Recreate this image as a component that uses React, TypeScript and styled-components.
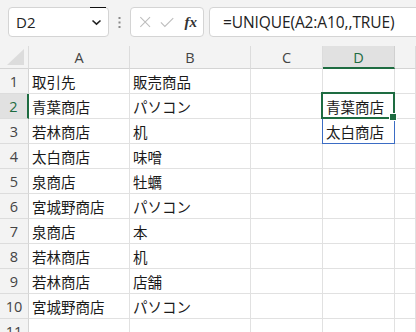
import React from 'react';
import styled, { createGlobalStyle } from 'styled-components';

const GlobalStyle = createGlobalStyle`
    html, body {
        margin: 0;
        padding: 0;
        background: #ffffff;
        overflow: hidden;
    }
    body {
        font-family: "Noto Sans", "Noto Sans CJK JP", sans-serif;
    }
`;

const GREEN = '#1e6c41';
const GRID = '#e1e1e1';

const Page = styled.div`
    width: 416px;
    height: 332px;
    display: flex;
    flex-direction: column;
    background: #f3f3f3;
`;

const Toolbar = styled.div`
    display: flex;
    align-items: center;
    height: 30px;
    padding: 7px 0 0 8px;
    margin-bottom: 9px;
`;

const NameBox = styled.div`
    position: relative;
    box-sizing: border-box;
    width: 101px;
    height: 30px;
    background: #fff;
    border: 1px solid #d4d4d4;
    border-radius: 4px;
    display: flex;
    align-items: center;
    justify-content: space-between;
    padding: 0 6px 0 7px;
    font-family: "Open Sans", "Noto Sans", sans-serif;
    font-size: 15px;
    color: #222;
`;

const FocusMark = styled.span`
    position: absolute;
    top: -1px;
    right: 2px;
    width: 16px;
    height: 1px;
    background: #111;
`;

const Grip = styled.div`
    width: 21px;
    display: flex;
    justify-content: center;
`;

const FxBox = styled.div`
    box-sizing: border-box;
    width: 74px;
    height: 30px;
    background: #fff;
    border: 1px solid #d4d4d4;
    border-radius: 4px;
    display: flex;
    align-items: center;
    padding: 0 6px 0 8px;
    gap: 9px;
`;

const FxText = styled.span`
    font-family: "Liberation Serif", "DejaVu Serif", serif;
    font-style: italic;
    font-weight: bold;
    font-size: 15px;
    color: #333;
    margin-left: 1px;
`;

const FormulaBox = styled.div`
    box-sizing: border-box;
    flex: 1;
    height: 30px;
    margin-left: 5px;
    margin-right: -8px;
    background: #fff;
    border: 1px solid #d4d4d4;
    border-radius: 4px;
    display: flex;
    align-items: center;
    padding-left: 13px;
    font-family: "Open Sans", "Noto Sans", sans-serif;
    font-size: 15.5px;
    color: #222;
    letter-spacing: -0.1px;
`;

const Sheet = styled.div`
    flex: 1;
    display: grid;
    grid-template-columns: 29px 101px 121px 72px 72px 1fr;
    grid-template-rows: 23px repeat(11, 25px);
    background: #fff;
`;

const ColHead = styled.div<{ $active?: boolean }>`
    box-sizing: border-box;
    background: ${p => (p.$active ? '#e1e1e1' : '#f3f3f3')};
    border-right: 1px solid ${p => (p.$active ? '#d0d0d0' : '#dcdcdc')};
    border-bottom: ${p => (p.$active ? `2px solid ${GREEN}` : '1px solid #d4d4d4')};
    display: flex;
    align-items: center;
    justify-content: center;
    font-family: "Open Sans", "Noto Sans", sans-serif;
    font-size: 14.5px;
    color: ${p => (p.$active ? GREEN : '#444')};
    padding-top: ${p => (p.$active ? '1px' : '0')};
`;

const Corner = styled.div`
    box-sizing: border-box;
    background: #f3f3f3;
    border-right: 1px solid #dcdcdc;
    border-bottom: 1px solid #d4d4d4;
    display: flex;
    align-items: flex-end;
    justify-content: flex-end;
    padding: 0 4px 3px 0;
`;

const RowHead = styled.div<{ $active?: boolean }>`
    box-sizing: border-box;
    background: ${p => (p.$active ? '#e1e1e1' : '#f3f3f3')};
    border-right: ${p => (p.$active ? `2px solid ${GREEN}` : '1px solid #d4d4d4')};
    border-bottom: 1px solid #dcdcdc;
    display: flex;
    align-items: center;
    justify-content: center;
    font-family: "Open Sans", "Noto Sans", sans-serif;
    font-size: 14.5px;
    color: ${p => (p.$active ? GREEN : '#444')};
`;

const Cell = styled.div`
    position: relative;
    box-sizing: border-box;
    border-right: 1px solid ${GRID};
    border-bottom: 1px solid ${GRID};
    display: flex;
    align-items: center;
    padding-left: 3px;
    font-family: "Noto Sans CJK JP", "Noto Sans", sans-serif;
    font-size: 14.5px;
    color: #1a1a1a;
    white-space: nowrap;
`;

const ActiveFrame = styled.div`
    position: absolute;
    left: -2px;
    top: -2px;
    right: -1px;
    bottom: -1px;
    border: 2px solid ${GREEN};
    pointer-events: none;
    z-index: 2;
`;

const FillHandle = styled.div`
    position: absolute;
    right: -4px;
    bottom: -4px;
    width: 6px;
    height: 6px;
    background: ${GREEN};
    border: 1px solid #fff;
`;

const SpillFrame = styled.div`
    position: absolute;
    left: -1px;
    top: -1px;
    right: -1px;
    bottom: -1px;
    border: 1px solid #3b6cc4;
    pointer-events: none;
    z-index: 1;
`;

const rows: [string, string][] = [
    ['取引先', '販売商品'],
    ['青葉商店', 'パソコン'],
    ['若林商店', '机'],
    ['太白商店', '味噌'],
    ['泉商店', '牡蠣'],
    ['宮城野商店', 'パソコン'],
    ['泉商店', '本'],
    ['若林商店', '机'],
    ['若林商店', '店舗'],
    ['宮城野商店', 'パソコン'],
    ['', ''],
];

const spill = ['', '青葉商店', '太白商店'];

const Chevron = () => (
    <svg width="11" height="7" viewBox="0 0 11 7">
        <path d="M1.5 1.5 L5.5 5.2 L9.5 1.5" fill="none" stroke="#222" strokeWidth="1.6" />
    </svg>
);

const Dots = () => (
    <svg width="3" height="11" viewBox="0 0 3 11">
        <rect x="0.5" y="0" width="2" height="2" fill="#8a8a8a" />
        <rect x="0.5" y="4.5" width="2" height="2" fill="#8a8a8a" />
        <rect x="0.5" y="9" width="2" height="2" fill="#8a8a8a" />
    </svg>
);

const Cross = () => (
    <svg width="14" height="14" viewBox="0 0 14 14">
        <path d="M1.5 1.5 L12.5 12.5 M12.5 1.5 L1.5 12.5" stroke="#bdbdbd" strokeWidth="1.2" />
    </svg>
);

const Check = () => (
    <svg width="16" height="12" viewBox="0 0 16 12">
        <path d="M1 6.5 L5.5 11 L15 1.5" fill="none" stroke="#bdbdbd" strokeWidth="1.2" />
    </svg>
);

const CornerTriangle = () => (
    <svg width="17" height="16" viewBox="0 0 17 16">
        <path d="M17 0 L17 16 L0 16 Z" fill="#dcdcdc" />
    </svg>
);

export default function App() {
    return (
        <>
            <GlobalStyle />
            <Page>
                <Toolbar>
                    <NameBox>
                        <FocusMark />
                        <span>D2</span>
                        <Chevron />
                    </NameBox>
                    <Grip>
                        <Dots />
                    </Grip>
                    <FxBox>
                        <Cross />
                        <Check />
                        <FxText>fx</FxText>
                    </FxBox>
                    <FormulaBox>=UNIQUE(A2:A10,,TRUE)</FormulaBox>
                </Toolbar>

                <Sheet>
                    <Corner>
                        <CornerTriangle />
                    </Corner>
                    <ColHead>A</ColHead>
                    <ColHead>B</ColHead>
                    <ColHead>C</ColHead>
                    <ColHead $active>D</ColHead>
                    <ColHead />

                    {rows.map(([a, b], i) => (
                        <React.Fragment key={i}>
                            <RowHead $active={i === 1}>{i + 1}</RowHead>
                            <Cell>{a}</Cell>
                            <Cell>{b}</Cell>
                            <Cell />
                            <Cell>
                                {spill[i] ?? ''}
                                {i === 1 && (
                                    <ActiveFrame>
                                        <FillHandle />
                                    </ActiveFrame>
                                )}
                                {i === 2 && <SpillFrame />}
                            </Cell>
                            <Cell />
                        </React.Fragment>
                    ))}
                </Sheet>
            </Page>
        </>
    );
}
